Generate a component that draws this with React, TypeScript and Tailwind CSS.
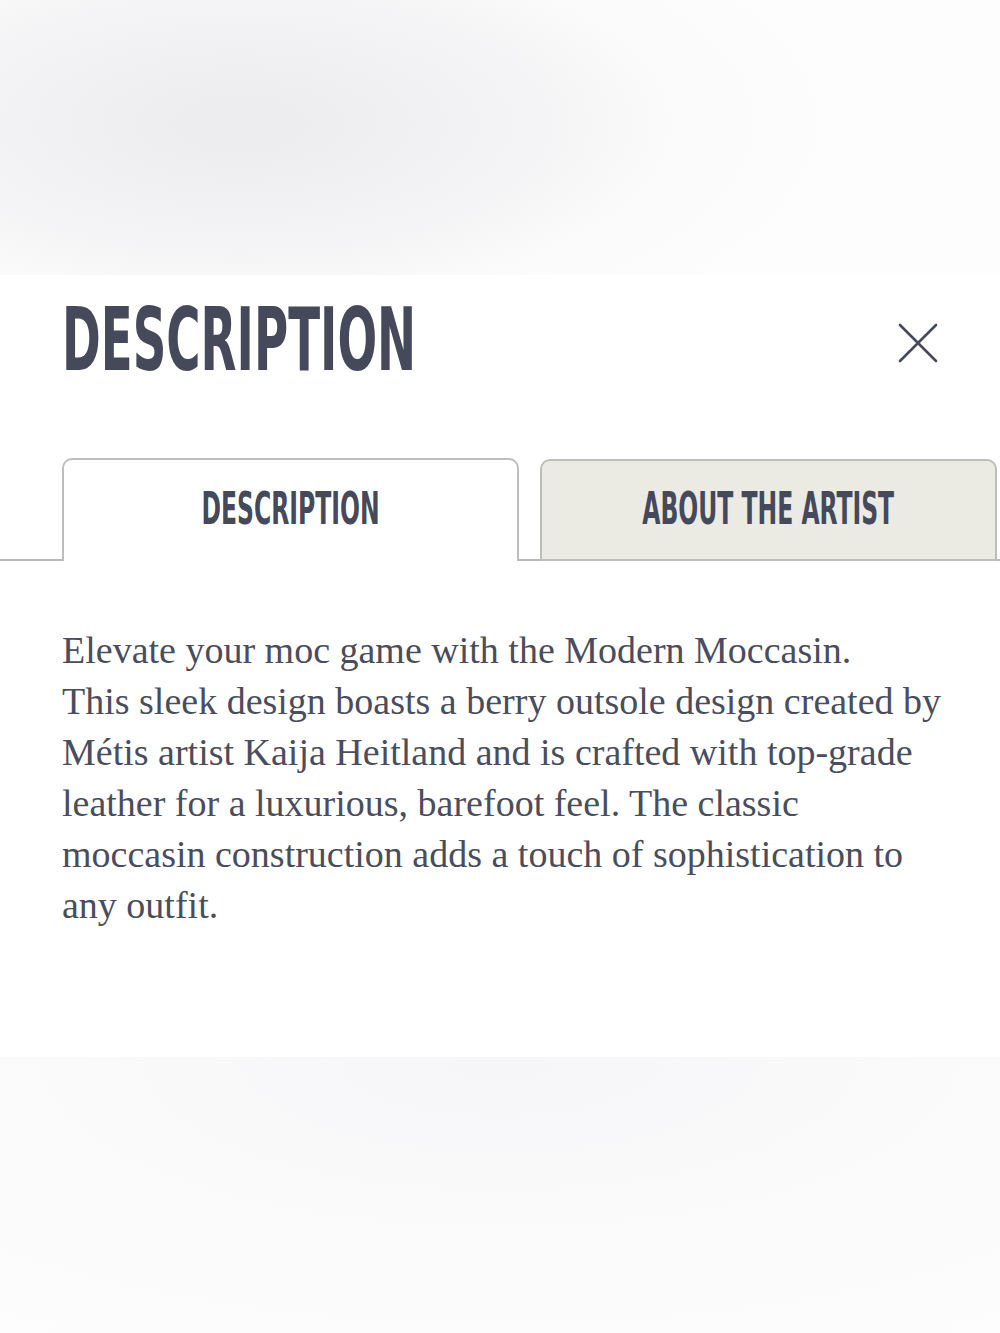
const heading = "font-['Liberation_Sans_Narrow','DejaVu_Sans_Condensed',sans-serif] font-bold text-[#454959] uppercase whitespace-nowrap";

function CloseIcon() {
  return (
    <svg width="40" height="40" viewBox="0 0 40 40" fill="none" stroke="#454959" strokeWidth="2.6" strokeLinecap="round">
      <path d="M2 2 L38 38 M38 2 L2 38" />
    </svg>
  );
}

const lines = [
  "Elevate your moc game with the Modern Moccasin.",
  "This sleek design boasts a berry outsole design created by",
  "Métis artist Kaija Heitland and is crafted with top-grade",
  "leather for a luxurious, barefoot feel. The classic",
  "moccasin construction adds a touch of sophistication to",
  "any outfit.",
];

export default function App() {
  return (
    <div className="w-[1000px] h-[1333px] flex flex-col bg-white">
      {/* backdrop behind the sheet */}
      <div className="h-[275px] bg-[radial-gradient(ellipse_60%_90%_at_24%_45%,#ececee_0%,#f3f3f5_45%,#fbfbfb_75%,#fdfdfd_100%)]" />

      <div className="h-[782px] bg-white flex flex-col">
        <div className="flex items-center justify-between pl-[62px] pr-[62px] h-[136px]">
          <h2 className={`${heading} text-[88px] leading-none inline-block origin-left scale-x-[0.59] -translate-y-[3px]`}>Description</h2>
          <CloseIcon />
        </div>

        <div className="flex items-end mt-[47px] h-[103px]">
          <div className="w-[62px] border-b-2 border-[#b8b8b8]" />
          <button className="w-[457px] h-full border-2 border-b-0 border-[#bdbdbd] rounded-t-[10px] bg-white flex items-center justify-center pb-[4px]">
            <span className={`${heading} text-[45px] leading-none inline-block scale-x-[0.58]`}>Description</span>
          </button>
          <div className="w-[21px] border-b-2 border-[#b8b8b8]" />
          <button className="w-[457px] h-[102px] border-2 border-[#bdbdbd] rounded-t-[10px] bg-[#ebebe4] flex items-center justify-center pb-[4px]">
            <span className={`${heading} text-[45px] leading-none inline-block scale-x-[0.58]`}>About the artist</span>
          </button>
          <div className="flex-1 border-b-2 border-[#b8b8b8]" />
        </div>

        <p className="px-[62px] pt-[64px] font-['Liberation_Serif',serif] text-[38px] leading-[51px] text-[#4a4d5b]">
          {lines.map((l, i) => (
            <span key={i} className="block whitespace-nowrap">{l}</span>
          ))}
        </p>
      </div>

      <div className="flex-1 bg-[radial-gradient(ellipse_90%_120%_at_50%_0%,#f6f6f8_0%,#fafafb_50%,#fdfdfd_100%)]" />
    </div>
  );
}
